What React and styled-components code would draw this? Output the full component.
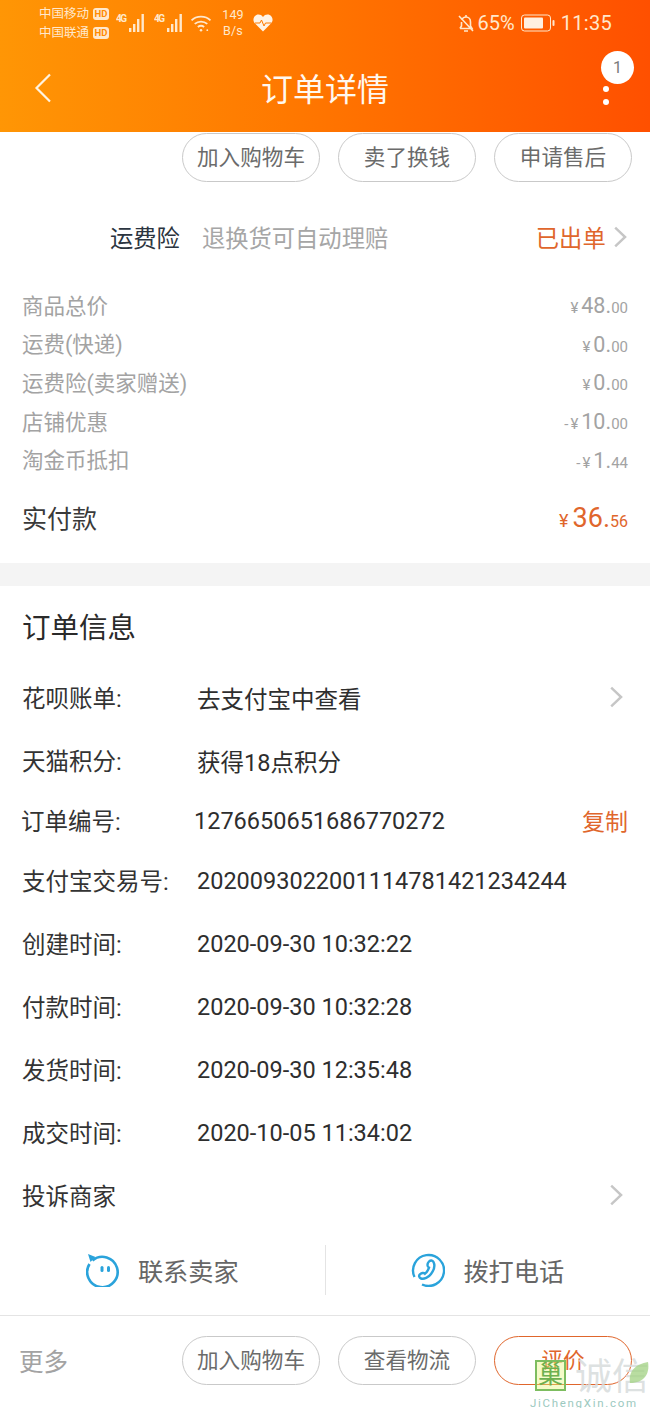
import React from "react";
import styled, { createGlobalStyle } from "styled-components";

const Global = createGlobalStyle`
  html, body { margin: 0; padding: 0; background: #fff; }
  body { font-family: Roboto, "Noto Sans CJK SC", sans-serif; }
  * { box-sizing: border-box; }
`;
const Page = styled.div`
  width: 650px; height: 1408px; position: relative; overflow: hidden; background: #fff;
  display: flex; flex-direction: column;
`;
const Header = styled.header`
  height: 132px; flex: none; color: #fff;
  background: linear-gradient(90deg, #ff9605 0%, #ff7800 45%, #ff5000 100%);
  display: flex; flex-direction: column;
`;
const StatusBar = styled.div`
  height: 46px; padding: 0 38px 0 39px; display: flex; align-items: center; justify-content: space-between;
  color: #ffe8cc;
`;
const StatusGroup = styled.div`display: flex; align-items: center;`;
const Carriers = styled.div`
  font-size: 12.5px; line-height: 19px; display: flex; flex-direction: column; width: 77px; flex: none;
`;
const Carrier = styled.div`display: flex; align-items: center; gap: 4px; white-space: nowrap;`;
const HD = styled.span`
  font-size: 9.5px; line-height: 11px; font-weight: 700; background: #ffe8cc; color: #ff8a00; border-radius: 3px; padding: 0 1.500px; height: 12px;
`;
const IconGap = styled.span`width: ${p => p.$w}px; flex: none;`;
const Speed = styled.div`
  font-size: 12.5px; line-height: 16px; text-align: center; width: 24px; margin: 0 8px 0 9px; letter-spacing: .2px;
`;
const BatteryPct = styled.span`font-size: 20px; margin: 0 6px 0 3px;`;
const Clock = styled.span`font-size: 20px; margin-left: 6px; letter-spacing: .3px;`;
const NavBar = styled.div`
  flex: 1; display: flex; align-items: center; justify-content: space-between; padding: 0 14px 0 34px; position: relative;
`;
const Title = styled.h1`
  position: absolute; left: 0; right: 0; top: 21px; margin: 0; text-align: center;
  font-size: 32px; line-height: 46px; font-weight: 400; color: #fff8f0;
`;
const Badge = styled.span`
  position: absolute; right: 16px; top: 5px; width: 33px; height: 33px; border-radius: 50%; background: #fff;
  color: #7a7a7a; font-size: 16px; display: flex; align-items: center; justify-content: center;
`;
const Dots = styled.div`
  position: absolute; right: 41px; top: 40px; display: flex; flex-direction: column; gap: 7px;
`;
const Dot = styled.i`display: block; width: 6px; height: 6px; border-radius: 50%; background: #fff;`;
const ButtonRow = styled.div`
  height: 50px; flex: none; padding: 0 18px; display: flex; justify-content: flex-end; align-items: flex-end; gap: 18px;
  ${p => p.$bottom && `height: 92px; align-items: center; justify-content: space-between; padding: 0 18px 1px 19px; border-top: 1px solid #e4e4e4;`}
`;
const Pill = styled.div`
  width: 138px; height: 49px; border-radius: 25px; border: 1px solid ${p => p.$accent ? "#e0662c" : "#c9c9c9"};
  color: ${p => p.$accent ? "#e0662c" : "#6b6b6b"}; font-size: 21.6px; display: flex; align-items: center; justify-content: center; background: #fff;
  padding-bottom: 4px;
`;
const PillGroup = styled.div`display: flex; gap: 18px;`;
const More = styled.span`font-size: 24.5px; color: #a3a3a3;`;
const InsuranceRow = styled.div`
  height: 50px; margin-top: 30px; flex: none; display: flex; align-items: center; padding: 0 23px 0 110px; font-size: 23.3px;
`;
const InsName = styled.span`color: #2b3440; margin-right: 22px;`;
const InsText = styled.span`color: #a6a6a6; flex: 1;`;
const InsStatus = styled.span`color: #e0662c; margin-right: 7px;`;
const PriceList = styled.div`margin-top: 23px; padding: 0 22px; display: flex; flex-direction: column;`;
const PriceRow = styled.div`
  height: 38.6px; display: flex; align-items: center; justify-content: space-between; font-size: 21.5px; color: #a3a3a3;
`;
const Amount = styled.span`
  display: flex; align-items: baseline; color: ${p => p.$accent ? "#e0662c" : "#a3a3a3"}; font-size: ${p => p.$accent ? 27 : 21.5}px;
  padding-top: 3px;
`;
const Cents = styled.span`font-size: ${p => p.$accent ? 16 : 15}px;`;
const Yen = styled.span`font-size: ${p => p.$accent ? 18 : 15}px; margin-right: ${p => p.$accent ? 2 : 1}px; letter-spacing: 2px;`;
const Total = styled.div`
  height: 44px; margin-top: 17px; padding: 0 22px; display: flex; align-items: center; justify-content: space-between; font-size: 25px; color: #3a3a3a;
`;
const Band = styled.div`height: 23px; margin-top: 24px; background: #f4f4f4; flex: none;`;
const SectionTitle = styled.h2`
  margin: 22px 0 0 22px; font-size: 28.5px; line-height: 42px; font-weight: 400; color: #2a2a2a;
`;
const InfoList = styled.div`margin-top: 16px; display: flex; flex-direction: column;`;
const InfoRow = styled.div`
  height: ${p => p.$h}px; display: flex; align-items: center; padding: 0 27px 0 ${p => p.$shift ? 21 : 22}px;
  font-size: 23.5px; color: #333; white-space: nowrap;
`;
const InfoLabel = styled.span`width: ${p => p.$shift ? 173 : 175}px; flex: none;`;
const InfoValue = styled.span`flex: 1; color: #2e2e2e; padding-top: 1px;`;
const Copy = styled.span`color: #e0662c; font-size: 23px; margin-right: -5px;`;
const ContactBar = styled.div`
  height: 74px; margin: 6px 0 8px; flex: none; display: flex; align-items: center;
`;
const ContactItem = styled.div`
  flex: 1; height: 50px; display: flex; align-items: center; justify-content: center; gap: 18px; font-size: 25.2px; color: #666;
  ${p => p.$divider && `border-left: 1px solid #e4e4e4;`}
`;
const Watermark = styled.div`
  position: absolute; left: 528px; top: 1355px; width: 122px; height: 53px; overflow: hidden; pointer-events: none;
`;
const WmSquare = styled.div`
  position: absolute; left: 7px; top: 5px; width: 31px; height: 31px; border: 2px solid #7dbd60; background: rgba(230,245,120,.4);
  color: #6db04f; font-size: 25px; line-height: 26px; text-align: center; font-weight: 400;
`;
const WmName = styled.div`
  position: absolute; left: 47px; top: 0; font-size: 37px; line-height: 46px; color: rgba(215,220,220,.85); white-space: nowrap;
`;
const WmLeaf = styled.svg`position: absolute; left: 100px; top: 6px;`;
const WmUrl = styled.div`
  position: absolute; left: 2px; top: 41px; font-size: 11.5px; line-height: 14px; letter-spacing: 1.7px; color: #9cc9c0; white-space: nowrap;
`;
const Chevron = ({ size = 22, color = "#c6c6c6", w = 2.2 }) => (
  <svg width={size * 0.65} height={size} viewBox="0 0 13 20" fill="none" style={{ flex: "none" }}>
    <path d="M2 1.5 11 10 2 18.5" stroke={color} strokeWidth={w} />
  </svg>
);
const Signal = () => (
  <svg width="30" height="20" viewBox="0 0 30 20" fill="#ffe8cc" style={{ flex: "none" }}>
    <text x="0" y="9" fontSize="10" fontWeight="700" fontFamily="Roboto" textLength="11">4G</text>
    <rect x="13" y="15" width="2.4" height="4" /><rect x="17" y="11" width="2.4" height="8" />
    <rect x="21" y="6" width="2.4" height="13" /><rect x="25.5" y="1" width="2.4" height="18" />
  </svg>
);
const Wifi = () => (
  <svg width="22" height="18" viewBox="0 0 24 20" fill="none" stroke="#ffe8cc" strokeWidth="2" style={{ flex: "none" }}>
    <path d="M1.5 7C7 1.5 17 1.5 22.5 7M5 11c4-3.5 10-3.5 14 0M8.5 14.5c2-1.6 5-1.6 7 0" />
    <circle cx="12" cy="18" r="1.4" fill="#ffe8cc" stroke="none" />
    <circle cx="19" cy="18" r="1" fill="#ffe8cc" stroke="none" />
  </svg>
);
const Heart = () => (
  <svg width="20" height="18" viewBox="0 0 20 18" style={{ flex: "none" }}>
    <path d="M10 17.5 1.8 9.3C-.6 6.7.3 2.4 3.4 1 5.7 0 8.500 .7 10 3c1.500-2.300 4.300-3 6.600-2 3.100 1.400 4 5.700 1.600 8.300Z" fill="#fff3e6" />
    <path d="M2 9h5l1.500-3 2.500 6 1.500-3h6" fill="none" stroke="#ff7a00" strokeWidth="1" />
  </svg>
);
const BellOff = () => (
  <svg width="18" height="19" viewBox="0 0 18 19" fill="none" stroke="#ffe8cc" strokeWidth="1.6" style={{ flex: "none" }}>
    <path d="M3 14.500h12l-1.500-2.500V8c0-3-2-5-4.500-5S5.500 4 4.800 6M4.500 8v4L3 14.500M7 17h4M9 1v2M2 2l14 15" />
  </svg>
);
const Battery = () => (
  <svg width="34" height="18" viewBox="0 0 34 18" style={{ flex: "none" }}>
    <rect x=".5" y="1" width="29" height="16" rx="3" fill="none" stroke="#ffe8cc" />
    <rect x="3" y="3.500" width="19" height="11" rx="1" fill="#fff0e0" />
    <rect x="31.500" y="6" width="2" height="6" rx="1" fill="#ffe8cc" />
  </svg>
);
const Smile = () => (
  <svg width="34" height="34" viewBox="0 0 34 34" fill="none">
    <path d="M6.500 7.500A15.200 15.200 0 1 1 3.500 11" stroke="#2aa3db" strokeWidth="2.600" />
    <path d="M2 1 9.500 4 4.500 9Z" fill="#2aa3db" />
    <rect x="14.500" y="13" width="3" height="6" rx="1.500" fill="#2aa3db" />
    <rect x="21" y="13" width="3" height="6" rx="1.500" fill="#2aa3db" />
  </svg>
);
const Phone = () => (
  <svg width="34" height="34" viewBox="0 0 34 34" fill="none" stroke="#2aa3db" strokeWidth="2.400">
    <path d="M3.500 24A15.500 15.500 0 1 1 11 31.500" />
    <path d="M18 8.500c1.500-1.500 3.500-1.500 4.500.5 1.500 3 .5 8-2.500 12-2.500 3.500-7 5.500-10 4.500-2-.7-2.500-3-1-4.200 1.500-1.300 3.800-2 5 -.6 1.800-1.500 3.200-3.500 4-6-1.700-.7-2.300-3.700 0-6.200Z" />
  </svg>
);

const prices = [
  ["商品总价", "¥", "48.", "00"],
  ["运费(快递)", "¥", "0.", "00"],
  ["运费险(卖家赠送)", "¥", "0.", "00"],
  ["店铺优惠", "-¥", "10.", "00"],
  ["淘金币抵扣", "-¥", "1.", "44"],
];
const info = [
  ["花呗账单:", "去支付宝中查看", 63, "chevron"],
  ["天猫积分:", "获得18点积分", 63],
  ["订单编号:", "1276650651686770272", 57, "copy", true],
  ["支付宝交易号:", "2020093022001114781421234244", 63],
  ["创建时间:", "2020-09-30 10:32:22", 63],
  ["付款时间:", "2020-09-30 10:32:28", 63],
  ["发货时间:", "2020-09-30 12:35:48", 63],
  ["成交时间:", "2020-10-05 11:34:02", 63],
  ["投诉商家", "", 63, "chevron"],
];

export default function App() {
  return (
    <Page>
      <Global />
      <Header>
        <StatusBar>
          <StatusGroup>
            <Carriers>
              <Carrier>中国移动<HD>HD</HD></Carrier>
              <Carrier>中国联通<HD>HD</HD></Carrier>
            </Carriers>
            <Signal /><IconGap $w={8} /><Signal /><IconGap $w={6} /><Wifi />
            <Speed>149<br />B/s</Speed>
            <Heart />
          </StatusGroup>
          <StatusGroup>
            <BellOff />
            <BatteryPct>65%</BatteryPct>
            <Battery />
            <Clock>11:35</Clock>
          </StatusGroup>
        </StatusBar>
        <NavBar>
          <svg width="18" height="30" viewBox="0 0 18 30" fill="none" style={{ marginTop: -2 }}>
            <path d="M16 1.500 2.500 15 16 28.500" stroke="#fff3e0" strokeWidth="2.200" />
          </svg>
          <Title>订单详情</Title>
          <Badge>1</Badge>
          <Dots><Dot /><Dot /></Dots>
        </NavBar>
      </Header>

      <ButtonRow>
        <Pill>加入购物车</Pill>
        <Pill>卖了换钱</Pill>
        <Pill>申请售后</Pill>
      </ButtonRow>

      <InsuranceRow>
        <InsName>运费险</InsName>
        <InsText>退换货可自动理赔</InsText>
        <InsStatus>已出单</InsStatus>
        <Chevron />
      </InsuranceRow>

      <PriceList>
        {prices.map(([label, y, a, c]) => (
          <PriceRow key={label}>
            <span>{label}</span>
            <Amount><Yen>{y}</Yen>{a}<Cents>{c}</Cents></Amount>
          </PriceRow>
        ))}
      </PriceList>
      <Total>
        <span>实付款</span>
        <Amount $accent><Yen $accent>¥</Yen>36.<Cents $accent>56</Cents></Amount>
      </Total>
      <Band />

      <SectionTitle>订单信息</SectionTitle>
      <InfoList>
        {info.map(([label, value, h, tail, shift]) => (
          <InfoRow key={label} $h={h} $shift={shift}>
            <InfoLabel $shift={shift}>{label}</InfoLabel>
            <InfoValue>{value}</InfoValue>
            {tail === "chevron" && <Chevron />}
            {tail === "copy" && <Copy>复制</Copy>}
          </InfoRow>
        ))}
      </InfoList>

      <ContactBar>
        <ContactItem><Smile />联系卖家</ContactItem>
        <ContactItem $divider><Phone />拨打电话</ContactItem>
      </ContactBar>

      <ButtonRow $bottom>
        <More>更多</More>
        <PillGroup>
          <Pill>加入购物车</Pill>
          <Pill>查看物流</Pill>
          <Pill $accent>评价</Pill>
        </PillGroup>
      </ButtonRow>

      <Watermark>
        <WmSquare>巢</WmSquare>
        <WmName>诚信</WmName>
        <WmLeaf width="22" height="26" viewBox="0 0 22 26">
          <path d="M2 22C0 10 8 3 20 1c2 12-4 21-18 21Z" fill="#a8d58a" opacity=".8" />
        </WmLeaf>
        <WmUrl>JiChengXin.com</WmUrl>
      </Watermark>
    </Page>
  );
}
